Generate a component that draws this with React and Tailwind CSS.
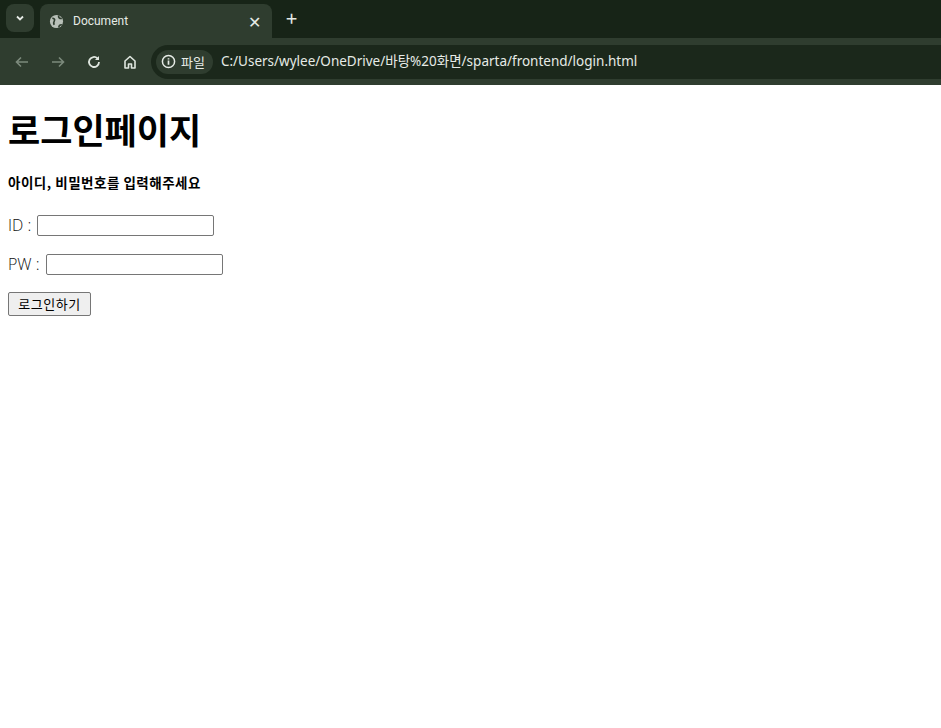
export default function App() {
  const f = { fontFamily: '"Noto Sans CJK KR","Noto Sans",sans-serif' };
  return (
    <div className="w-[941px] h-[728px] bg-white overflow-hidden" style={f}>
      <div className="h-[38px] bg-[#172417] flex items-end relative">
        <div className="absolute left-[6px] top-[4px] w-[28px] h-[28px] rounded-lg bg-[#2f3d2f] flex items-center justify-center">
          <svg width="12" height="12" viewBox="0 0 12 12"><path d="M3 4.5l3 3 3-3" stroke="#e6ebe6" strokeWidth="1.8" fill="none"/></svg>
        </div>
        <div className="ml-[40px] w-[232px] h-[34px] bg-[#2f3d2f] rounded-t-lg flex items-center px-[9px]">
          <svg width="15" height="15" viewBox="0 0 16 16"><circle cx="8" cy="8" r="7" fill="#b8c0b8"/><path d="M3.5 4.5c2 0 3 1.5 2.2 2.8S4.5 9.5 5.5 11.5M10.5 1.8c-1 2 .8 3.2 3.2 3M10.5 14.3c0-2 1-3 3.2-2.8" stroke="#2f3d2f" strokeWidth="1.8" fill="none"/></svg>
          <span className="ml-[9px] text-[12px] text-[#e6ebe6]" style={{fontFamily:'Roboto,sans-serif'}}>Document</span>
          <span className="ml-auto text-[#e6ebe6] text-[16px] leading-none pr-[2px]">✕</span>
        </div>
        <span className="ml-[14px] mb-[10px] text-[#e6ebe6] text-[20px] leading-none">+</span>
      </div>
      <div className="h-[47px] bg-[#2f3d2f] flex items-center">
        <svg className="ml-[14px]" width="16" height="16" viewBox="0 0 16 16"><path d="M14 8H3M7 3.5L2.5 8 7 12.5" stroke="#7c8a7c" strokeWidth="1.6" fill="none"/></svg>
        <svg className="ml-[20px]" width="16" height="16" viewBox="0 0 16 16"><path d="M2 8h11M9 3.5L13.5 8 9 12.5" stroke="#7c8a7c" strokeWidth="1.6" fill="none"/></svg>
        <svg className="ml-[20px]" width="16" height="16" viewBox="0 0 16 16"><path d="M13 8a5 5 0 1 1-1.5-3.6" stroke="#dfe6df" strokeWidth="1.8" fill="none"/><path d="M13 2v4H9z" fill="#dfe6df"/></svg>
        <svg className="ml-[20px]" width="16" height="16" viewBox="0 0 16 16"><path d="M3 14V7l5-4.5L13 7v7h-3.5v-4h-3v4z" stroke="#dfe6df" strokeWidth="1.6" fill="none" strokeLinejoin="round"/></svg>
        <div className="ml-[13px] flex-1 h-[34px] rounded-l-full bg-[#1b281b] flex items-center pl-[5px]">
          <div className="h-[24px] rounded-full bg-[#2f3d2f] flex items-center pl-[5px] pr-[8px] gap-[5px]">
            <svg width="15" height="15" viewBox="0 0 16 16"><circle cx="8" cy="8" r="6.5" stroke="#e6ebe6" strokeWidth="1.6" fill="none"/><path d="M8 7v4.5M8 4.5v1.3" stroke="#e6ebe6" strokeWidth="1.8"/></svg>
            <span className="text-[13px] text-[#e6ebe6]">파일</span>
          </div>
          <span className="ml-[8px] text-[13.5px] text-[#e6ebe6]" style={{fontFamily:'"Noto Sans","Noto Sans CJK KR",sans-serif'}}>C:/Users/wylee/OneDrive/바탕%20화면/sparta/frontend/login.html</span>
        </div>
      </div>
      <div className="px-[8px] text-black">
        <h1 className="text-[35px] font-bold leading-[40px] mt-[24px]">로그인페이지</h1>
        <h5 className="text-[13.5px] font-bold mt-[24px] leading-[18px] tracking-[0.5px]">아이디, 비밀번호를 입력해주세요</h5>
        <div className="mt-[23px] text-[16px] flex items-center h-[22px] text-[#111]" style={{fontFamily:'"Open Sans",sans-serif', fontWeight:300}}>ID :&nbsp;<input className="w-[177px] h-[21px] border border-[#767676] rounded-[2px] ml-[2px]" /></div>
        <div className="mt-[17px] text-[16px] flex items-center h-[22px] text-[#111]" style={{fontFamily:'"Open Sans",sans-serif', fontWeight:300}}>PW :&nbsp;<input className="w-[177px] h-[21px] border border-[#767676] rounded-[2px] ml-[2px]" /></div>
        <button className="mt-[17px] w-[83px] h-[24px] text-[13px] bg-[#efefef] border border-[#767676] rounded-[2px] tracking-[0.5px]">로그인하기</button>
      </div>
    </div>
  );
}
